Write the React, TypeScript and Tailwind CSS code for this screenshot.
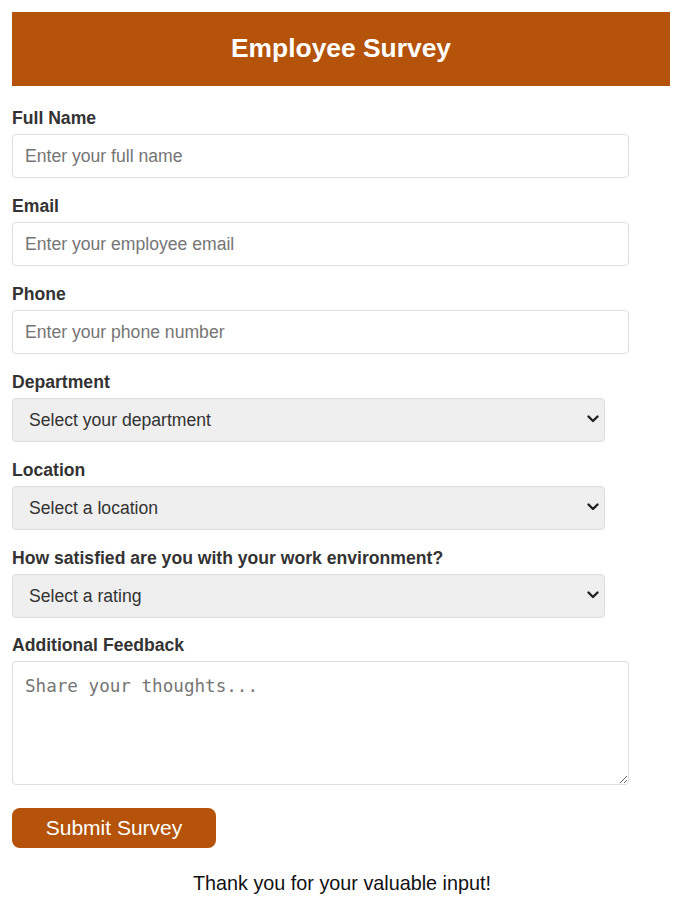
import React from "react";

const font = { fontFamily: '"Liberation Sans", Arial, sans-serif' };

function Label({ children }: { children: React.ReactNode }) {
  return (
    <label className="block text-[17.6px] leading-[20px] font-bold text-[#333] mb-[6px]">
      {children}
    </label>
  );
}

const inputCls =
  "block w-[617px] h-[44px] px-[12px] text-[17.6px] border border-[#ddd] rounded-[4px] placeholder:text-[#757575] text-[#333]";
const selectCls =
  "block appearance-none w-[593px] h-[44px] pl-[16px] pr-[32px] text-[17.6px] bg-[#efefef] border border-[#ddd] rounded-[4px] text-[#333]";

function Select({ text }: { text: string }) {
  return (
    <div className="relative w-[593px]">
      <select className={selectCls} defaultValue="">
        <option value="">{text}</option>
      </select>
      <svg
        className="absolute right-[6px] top-[16px] pointer-events-none"
        width="12"
        height="10"
        viewBox="0 0 12 10"
        fill="none"
      >
        <path d="M1.5 2.5 L6 7 L10.5 2.5" stroke="#222" strokeWidth="2.4" strokeLinecap="round" strokeLinejoin="round" />
      </svg>
    </div>
  );
}

export default function App() {
  return (
    <div className="bg-white min-h-[908px] p-[12px] text-[#333]" style={font}>
      <div className="bg-[#b45309] w-[658px] h-[74px] flex items-center justify-center">
        <h1 className="text-white text-[26.4px] font-bold">Employee Survey</h1>
      </div>
      <form className="mt-[22px]" onSubmit={(e) => e.preventDefault()}>
        <div className="mb-[18px]">
          <Label>Full Name</Label>
          <input className={inputCls} placeholder="Enter your full name" />
        </div>
        <div className="mb-[18px]">
          <Label>Email</Label>
          <input className={inputCls} placeholder="Enter your employee email" />
        </div>
        <div className="mb-[18px]">
          <Label>Phone</Label>
          <input className={inputCls} placeholder="Enter your phone number" />
        </div>
        <div className="mb-[18px]">
          <Label>Department</Label>
          <Select text="Select your department" />
        </div>
        <div className="mb-[18px]">
          <Label>Location</Label>
          <Select text="Select a location" />
        </div>
        <div className="mb-[17px]">
          <Label>How satisfied are you with your work environment?</Label>
          <Select text="Select a rating" />
        </div>
        <div className="mb-[23px]">
          <Label>Additional Feedback</Label>
          <textarea
            className="block w-[617px] h-[124px] px-[12px] py-[14px] text-[17.6px] leading-[20px] border border-[#ddd] rounded-[4px] placeholder:text-[#757575] resize"
            style={{ fontFamily: '"DejaVu Sans Mono", monospace' }}
            placeholder="Share your thoughts..."
          />
        </div>
        <button
          type="submit"
          className="block w-[204px] h-[40px] bg-[#b45309] text-white text-[21px] rounded-[8px]"
        >
          Submit Survey
        </button>
      </form>
      <p className="text-center text-[19.8px] leading-[23px] text-[#111] mt-[24px]">
        Thank you for your valuable input!
      </p>
    </div>
  );
}
